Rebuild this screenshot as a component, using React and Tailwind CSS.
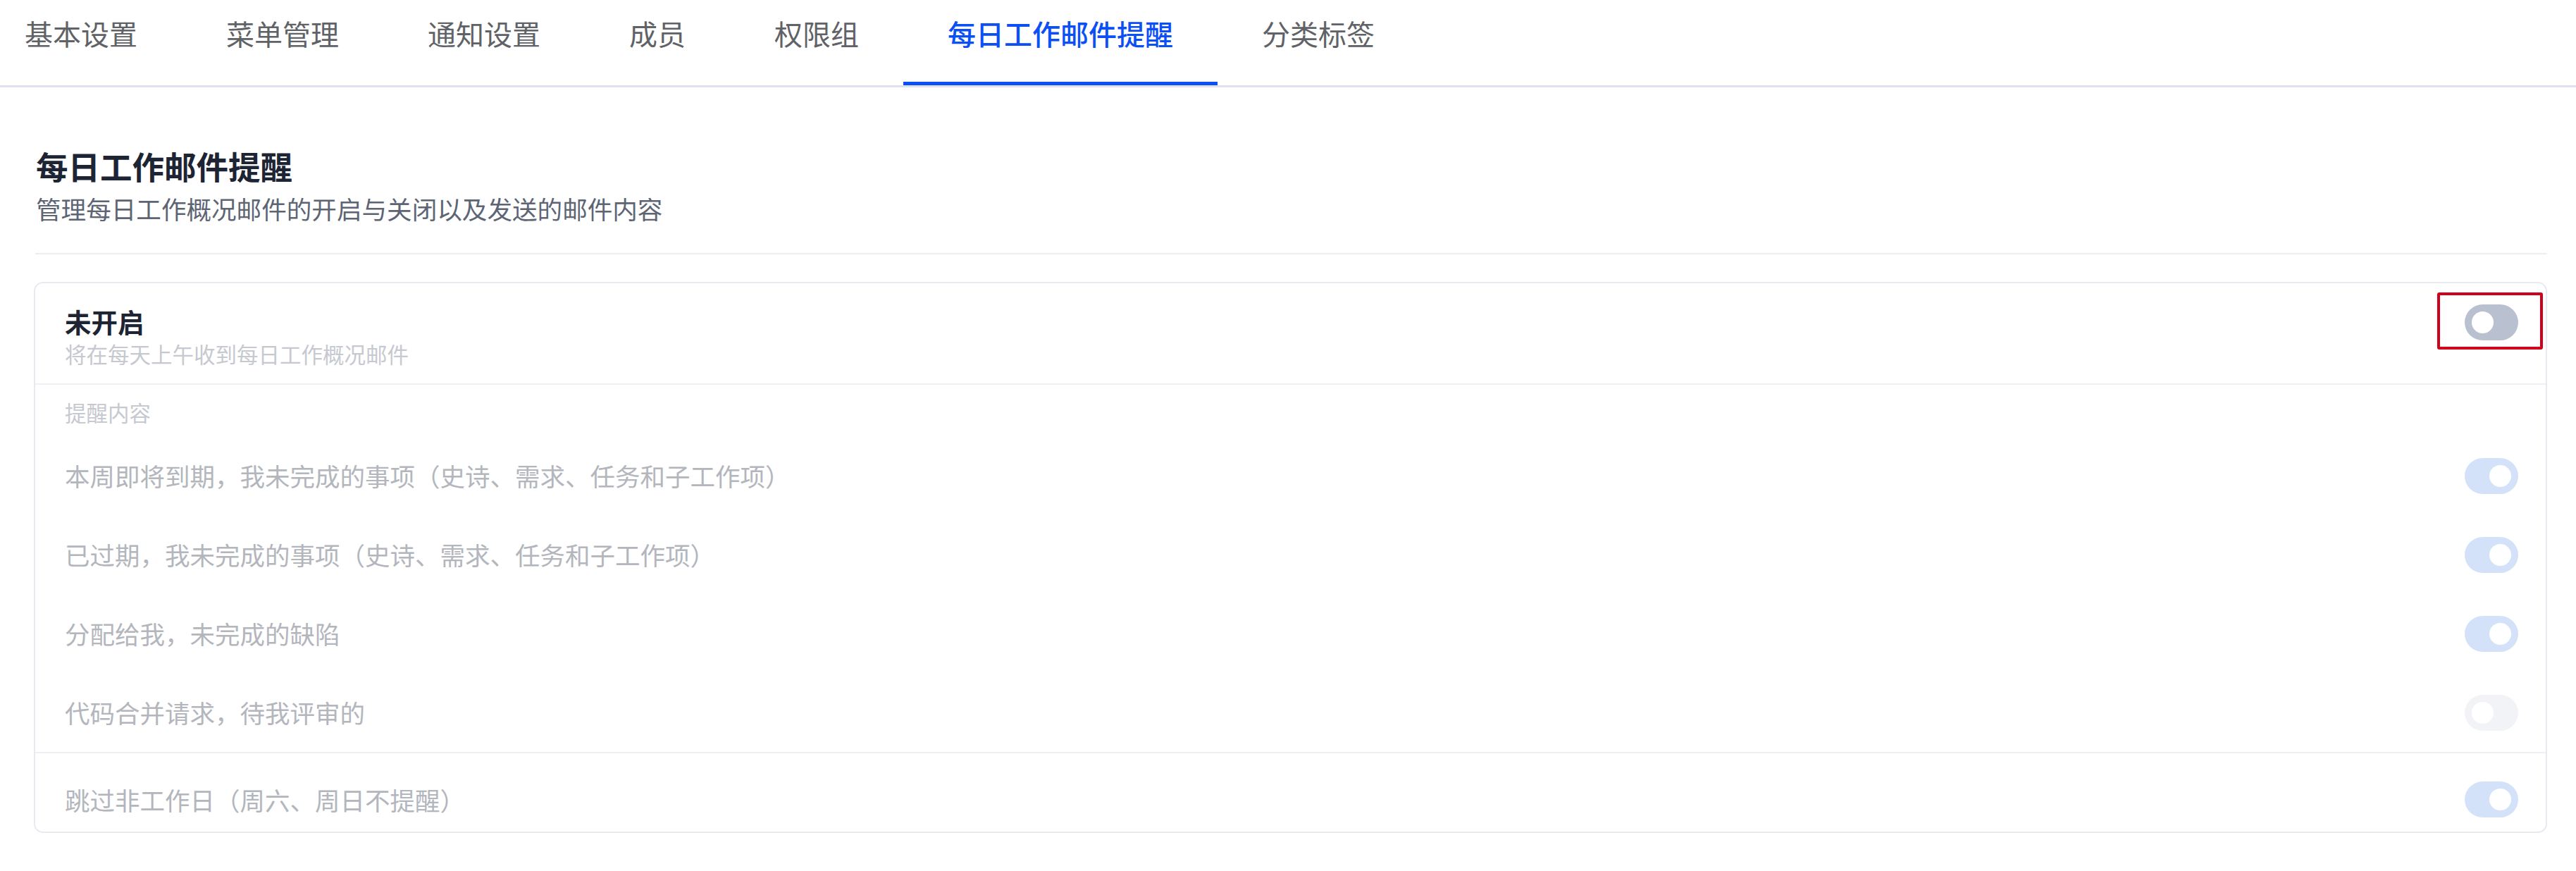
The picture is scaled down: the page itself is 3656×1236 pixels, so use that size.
import React from "react";

const tabs = ["基本设置", "菜单管理", "通知设置", "成员", "权限组", "每日工作邮件提醒", "分类标签"];

const items = [
  { text: "本周即将到期，我未完成的事项（史诗、需求、任务和子工作项）", on: true },
  { text: "已过期，我未完成的事项（史诗、需求、任务和子工作项）", on: true },
  { text: "分配给我，未完成的缺陷", on: true },
  { text: "代码合并请求，待我评审的", on: false },
];

function Toggle({ on, tone }) {
  const track =
    tone === "off" ? "bg-[#b9c0d0]" : on ? "bg-[#d4e2f9]" : "bg-[#f2f3f7]";
  return (
    <div
      className={`flex h-[51px] w-[76px] shrink-0 items-center rounded-full px-[10px] ${track} ${
        on ? "justify-end" : "justify-start"
      }`}
    >
      <div className="h-[31px] w-[31px] rounded-full bg-white" />
    </div>
  );
}

export default function App() {
  return (
    <div className="min-h-[1236px] w-full bg-white font-['Noto_Sans_CJK_SC','Noto_Sans',sans-serif]">
      {/* tabs */}
      <div className="flex h-[124px] border-b-[3px] border-[#dfe1ec]">
        {tabs.map((t, i) => {
          const active = i === 5;
          return (
            <div
              key={t}
              className={`relative h-full pt-[27px] text-[40px] leading-[40px] ${
                i === 0 ? "pl-[35px] pr-[63px]" : "px-[63px]"
              } ${active ? "font-medium text-[#0b4ff5]" : "text-[#5f6266]"}`}
            >
              {t}
              {active && <div className="absolute bottom-0 left-0 h-[5px] w-full bg-[#0b4ff5]" />}
            </div>
          );
        })}
      </div>

      <div className="pl-[48px] pr-[41px] pt-[80px]">
        <div className="pl-[3px]">
          <h1 className="text-[45.5px] font-bold leading-[63px] text-[#1d2433]">每日工作邮件提醒</h1>
          <p className="mt-[4px] text-[35.6px] leading-[50px] text-[#5d6575]">
            管理每日工作概况邮件的开启与关闭以及发送的邮件内容
          </p>
        </div>
        <div className="ml-[2px] mt-[38px] h-[2px] bg-[#eceef2]" />

        {/* card */}
        <div className="relative mt-[39px] rounded-[13px] border-2 border-[#e8eaf0]">
          <div className="flex items-start justify-between pb-[24px] pl-[42px] pr-[39px] pt-[26px]">
            <div>
              <div className="text-[37.5px] font-semibold leading-[56px] text-[#1d2433]">未开启</div>
              <div className="text-[30.5px] leading-[36px] text-[#c6c9cf]">将在每天上午收到每日工作概况邮件</div>
            </div>
            <div className="mt-[4px]">
              <Toggle on={false} tone="off" />
            </div>
          </div>
          {/* annotation box */}
          <div className="absolute right-[4px] top-[13px] h-[81px] w-[150px] rounded-[3px] border-4 border-[#d0021b]" />

          <div className="border-t-2 border-[#eef0f3] pl-[42px] pr-[39px] pt-[21px]">
            <div className="mb-[16px] text-[30.5px] leading-[36px] text-[#c6c9cf]">提醒内容</div>
            {items.map((it) => (
              <div key={it.text} className="flex h-[112px] items-center justify-between">
                <span className="text-[35.5px] text-[#b3b6bd]">{it.text}</span>
                <Toggle on={it.on} />
              </div>
            ))}
          </div>

          <div className="border-t-2 border-[#eef0f3] pl-[42px] pr-[39px] pt-[20px]">
            <div className="flex h-[91px] items-center justify-between">
              <span className="text-[35.5px] text-[#b3b6bd]">跳过非工作日（周六、周日不提醒）</span>
              <Toggle on />
            </div>
          </div>
        </div>
      </div>
    </div>
  );
}
